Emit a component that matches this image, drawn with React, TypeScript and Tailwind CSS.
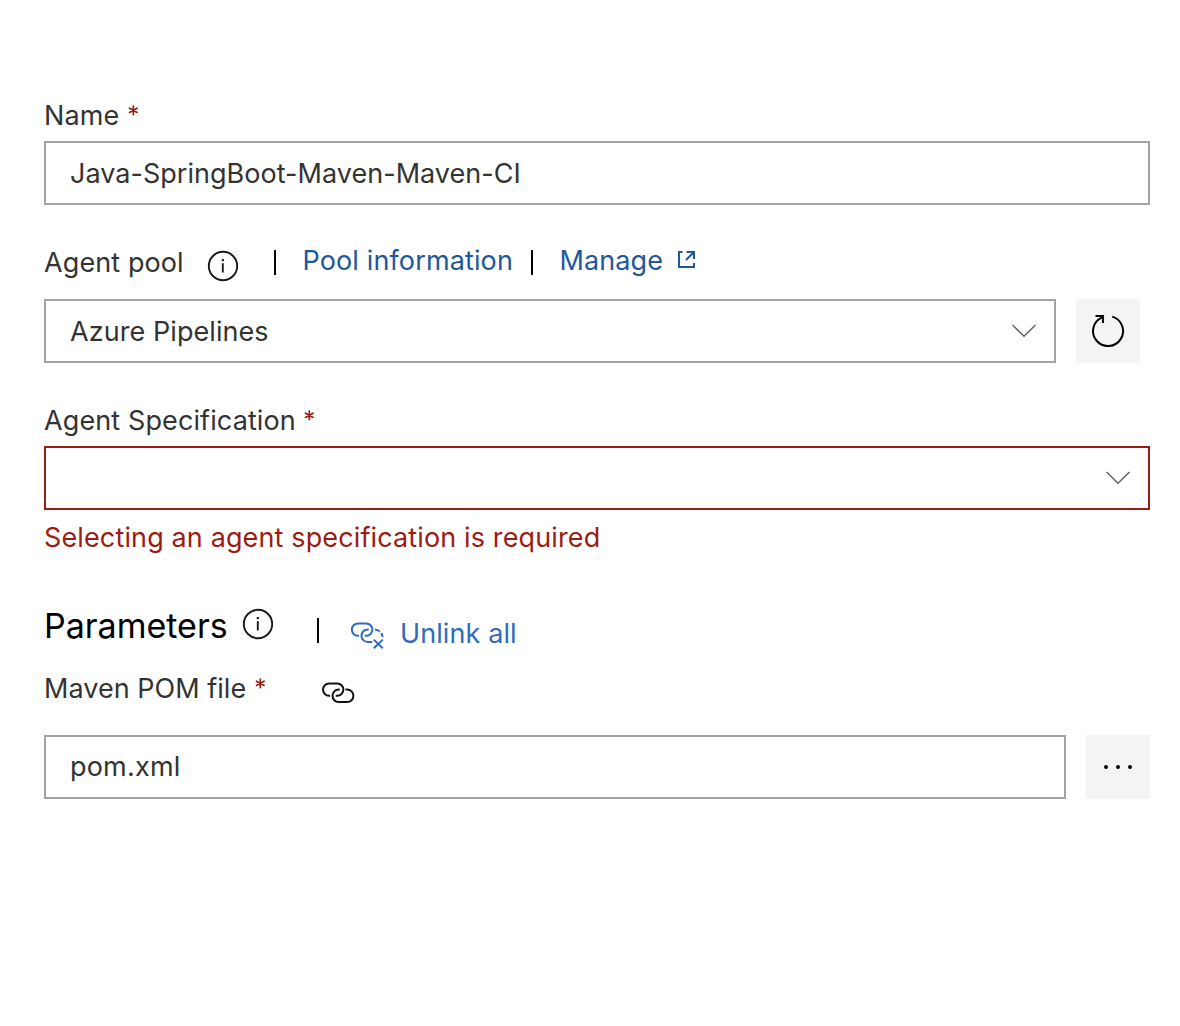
import React from "react";

function Info({ className }: { className: string }) {
  return (
    <svg className={className} width="32" height="32" viewBox="0 0 32 32" fill="none" stroke="#1a1a1a">
      <circle cx="16" cy="16" r="14.2" strokeWidth="1.9" />
      <path d="M15.8 13.2V22.500" strokeWidth="1.9" />
      <path d="M15.8 9v2.200" strokeWidth="2.1" />
    </svg>
  );
}

function Chevron() {
  return (
    <svg width="26" height="14" viewBox="0 0 26 14" fill="none" stroke="#666666" strokeWidth="1.6">
      <path d="M1.5 1 13 12.2 24.5 1" />
    </svg>
  );
}

function Star({ className }: { className: string }) {
  return (
    <svg className={className} width="11" height="12" viewBox="0 0 11 12" stroke="#9b1c12" strokeWidth="1.7" strokeLinecap="round">
      <path d="M5.300 1v8.600M1.500 3.200l7.600 4.200M9.100 3.200 1.500 7.400" />
    </svg>
  );
}

function Bar({ className }: { className: string }) {
  return <div className={"h-[25px] w-[2px] shrink-0 bg-black " + className} />;
}

const field = "flex h-16 items-center border-2 border-[#a3a3a3] pl-6";

export default function App() {
  return (
    <main className="h-[1026px] w-[1180px] overflow-hidden bg-white pl-11 pt-[99px] font-['Inter',sans-serif] text-[27px] leading-[34px] whitespace-nowrap text-[#333333]">
      <div className="flex h-[34px]">
        <span className="w-[84px] tracking-[0.1px]">Name</span>
        <Star className="mt-1.5" />
      </div>
      <div className={field + " mt-2 w-[1106px]"}>
        <span className="pt-0.5 tracking-[0.03px]">Java-SpringBoot-Maven-Maven-CI</span>
      </div>

      <div className="mt-[41px] flex h-[34px] items-start">
        <span className="w-[163px] tracking-[0.1px]">Agent pool</span>
        <Info className="mt-1 shrink-0" />
        <Bar className="ml-[35px] mt-1" />
        <a className="-mt-0.5 ml-[26.500px] w-[228.500px] tracking-[0.13px] text-[#20589b]">Pool information</a>
        <Bar className="mt-1" />
        <a className="-mt-0.5 ml-[26.500px] w-[118.500px] tracking-[0.1px] text-[#20589b]">Manage</a>
        <svg className="mt-1 shrink-0" width="18" height="18" viewBox="0 0 18 18" fill="none" stroke="#20589b" strokeWidth="2">
          <path d="M4.500 2H1v15h15v-4M8.500 2H16v7M16 2 8 10" />
        </svg>
      </div>
      <div className="mt-[19px] flex gap-5">
        <div className={field + " w-[1012px] justify-between pr-[17px]"}>
          <span className="pt-0.5 tracking-[0.07px]">Azure Pipelines</span>
          <Chevron />
        </div>
        <button className="flex size-16 items-center justify-center bg-[#f4f4f4]">
          <svg width="34" height="34" viewBox="0 0 34 34" fill="none" stroke="#000000" strokeWidth="2">
            <path d="M21.200 2.600A15 15 0 1 1 11 3.300" />
            <path d="M4.500 2H12v7" strokeWidth="2.1" />
          </svg>
        </button>
      </div>

      <div className="mt-[41px] flex h-[34px]">
        <span className="w-[260px] tracking-[0.11px]">Agent Specification</span>
        <Star className="mt-1.5" />
      </div>
      <div className="mt-2 flex h-16 w-[1106px] items-center justify-end border-2 border-[#9b1c12] pr-[17px]">
        <Chevron />
      </div>
      <p className="mt-[11px] tracking-[0.13px] text-[#9b1c12]">Selecting an agent specification is required</p>

      <div className="mt-[49px] flex h-11 items-start">
        <h2 className="w-[198px] text-[34px] leading-[44px] tracking-[0px] text-black">Parameters</h2>
        <Info className="mt-1 shrink-0" />
        <Bar className="ml-[43.400px] mt-3.5" />
        <svg className="ml-[31.600px] mt-[18px] shrink-0" width="34" height="28" viewBox="0 0 34 28" fill="none" stroke="#306cbd" strokeWidth="2">
          <path d="M8 13.800H7A6.200 6.200 0 0 1 7 1.400H15.200a6.200 6.200 0 0 1 0 12.400h-1.400M17.700 7.500h-1a6.200 6.200 0 0 0 0 12.400h4.500" />
          <path d="M24 7.500a6.500 6.500 0 0 1 4.800 2.200M30.300 11.200a6 6 0 0 1 1.100 4" />
          <path d="m22.800 17.600 9 8.700M31.800 17.600l-9 8.700" />
        </svg>
        <a className="ml-[15px] mt-[13px] tracking-[0.1px] text-[#306cbd]">Unlink all</a>
      </div>

      <div className="mt-6 flex h-[34px] items-start">
        <span className="w-[211px] tracking-[0.03px]">Maven POM file</span>
        <Star className="mt-1.5" />
        <svg className="ml-14 mt-[10px] shrink-0" width="33" height="22" viewBox="0 0 33 22" fill="none" stroke="#111111" strokeWidth="2">
          <path d="M8 13.800H7.200A6.200 6.200 0 0 1 7.200 1.400H15.200a6.200 6.200 0 0 1 0 12.400h-1.500M17.700 7.600h-1a6.200 6.200 0 0 0 0 12.400h8.500a6.200 6.200 0 0 0 0-12.400h-1.700" />
        </svg>
      </div>
      <div className="mt-[29px] flex gap-5">
        <div className={field + " w-[1022px]"}>
          <span className="tracking-[0.2px]">pom.xml</span>
        </div>
        <button className="flex size-16 items-center justify-center gap-2 bg-[#f4f4f4]">
          <i className="size-1 rounded-full bg-black" />
          <i className="size-1 rounded-full bg-black" />
          <i className="size-1 rounded-full bg-black" />
        </button>
      </div>
    </main>
  );
}
